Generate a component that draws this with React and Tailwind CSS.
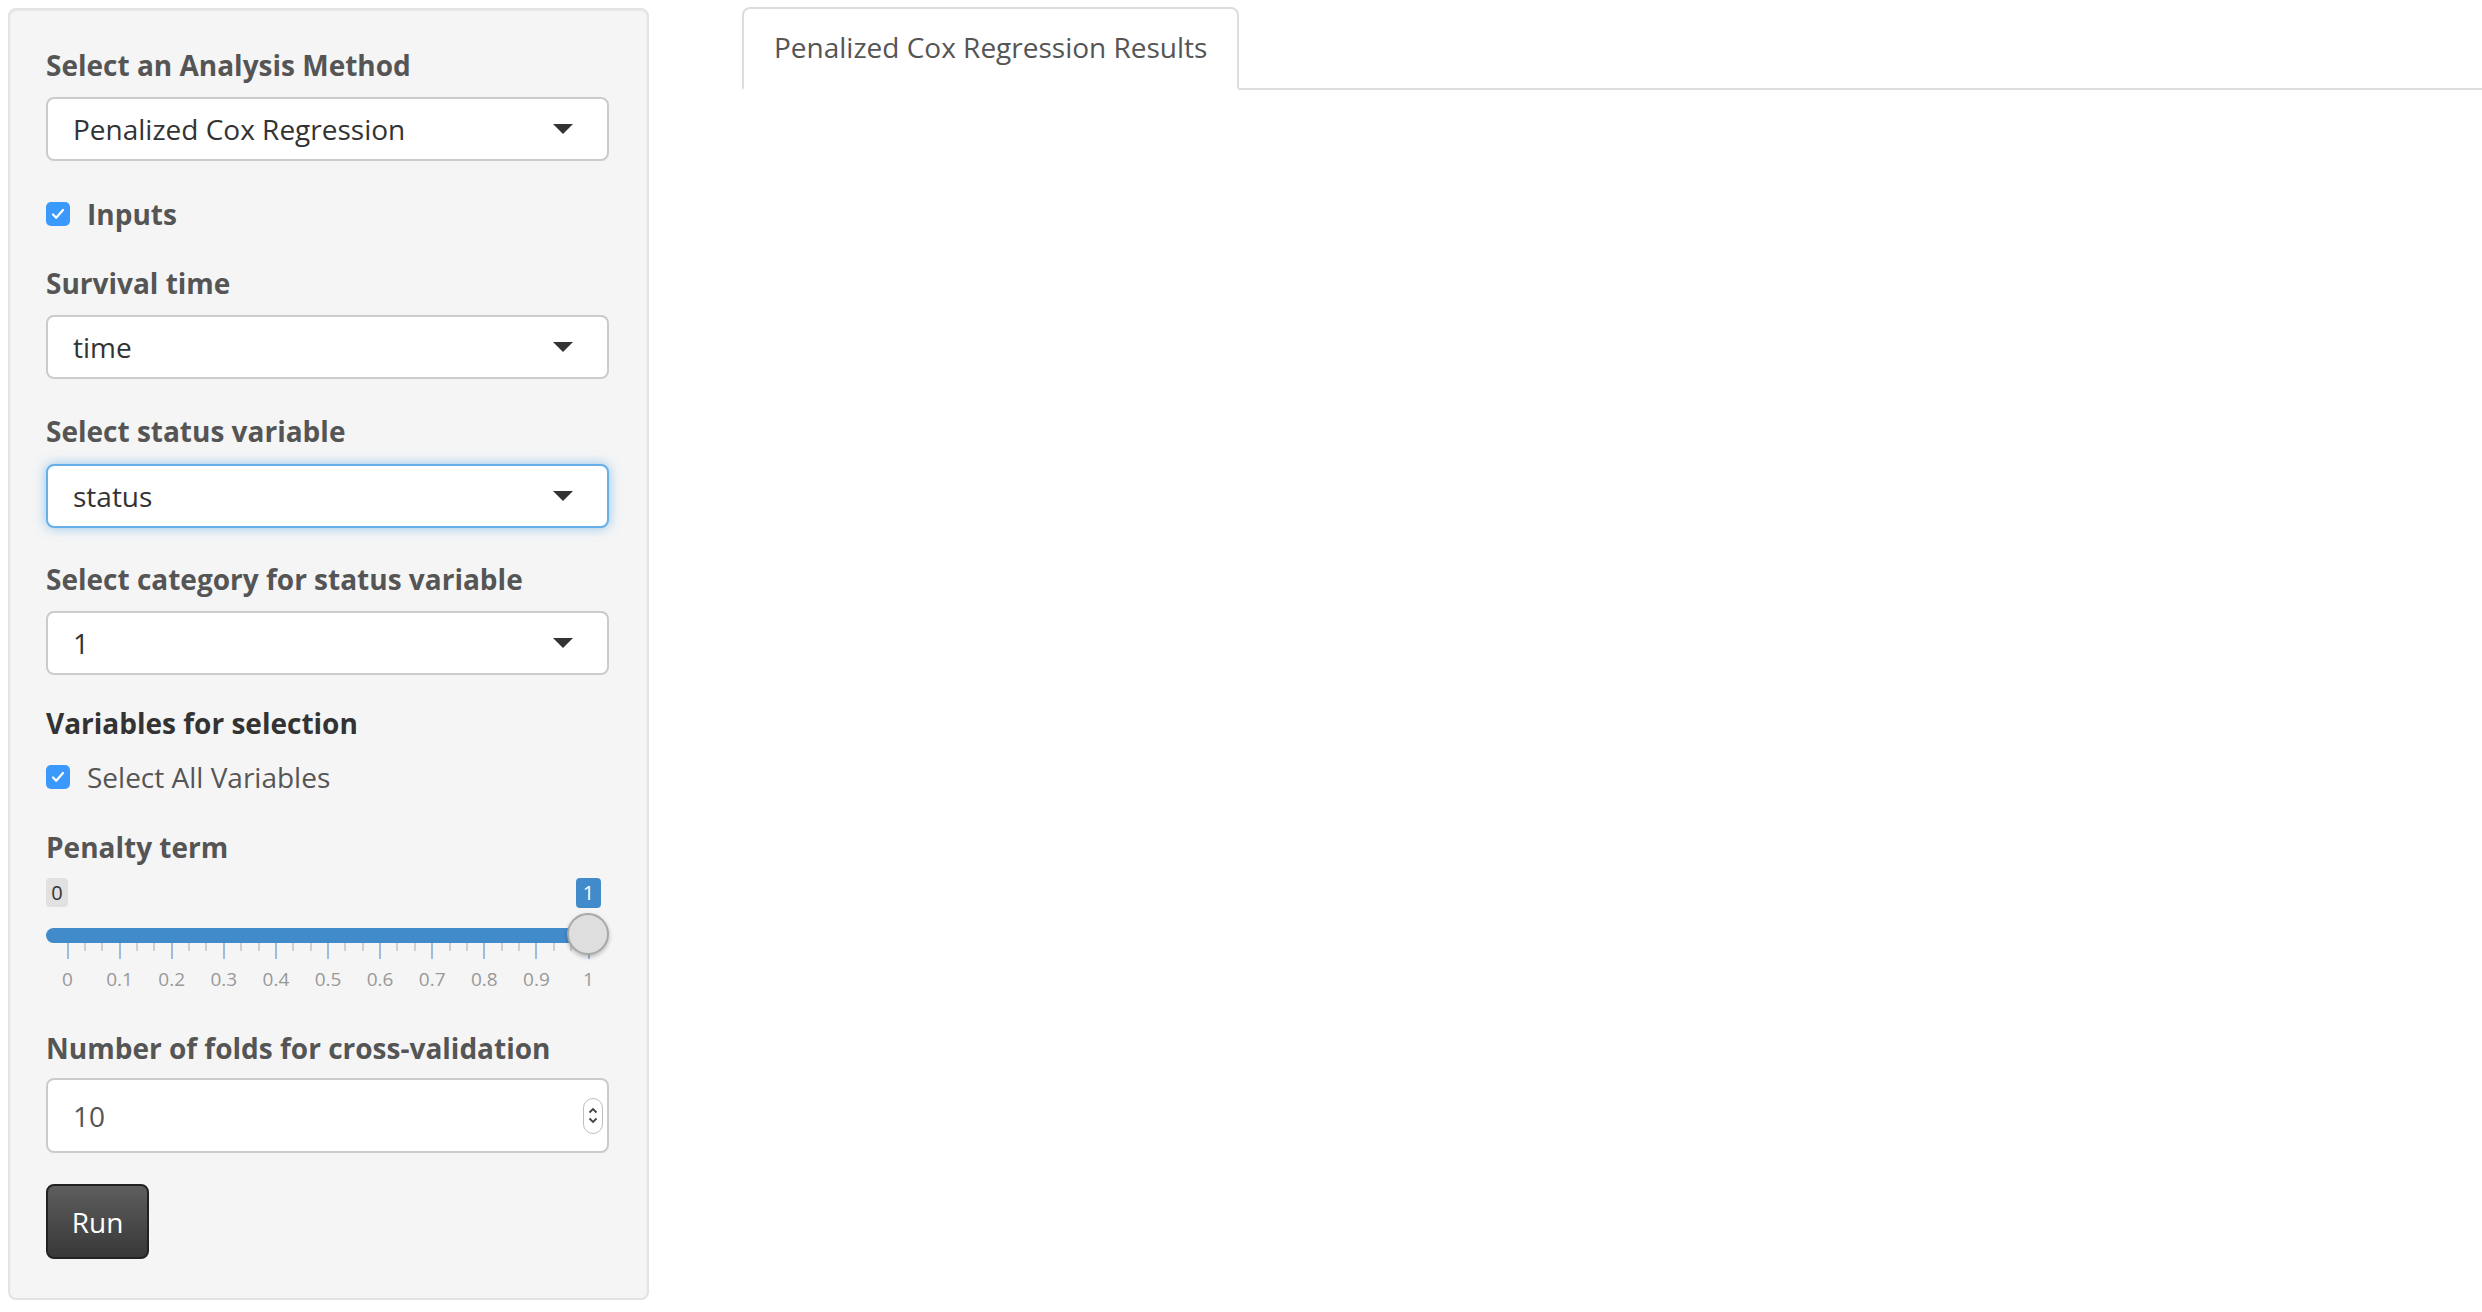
import { useState } from "react";

const font = { fontFamily: "'Open Sans', 'Liberation Sans', sans-serif" };

const labelCls = "block text-[28px] leading-[40px] font-bold text-[#555]";

function Caret() {
  return (
    <svg width="20" height="10" viewBox="0 0 20 10">
      <path d="M0 0h20L10 10z" fill="#333" />
    </svg>
  );
}

function Select({ value, focused, className }) {
  return (
    <div
      className={
        focused
          ? `flex h-[64px] items-center justify-between rounded-[8px] border-2 border-[#66afe9] bg-white pl-[25px] pr-[34px] text-[28px] text-[#333] shadow-[0_0_12px_rgba(102,175,233,0.7)] ${className}`
          : `flex h-[64px] items-center justify-between rounded-[8px] border-2 border-[#cbcbcb] bg-white pl-[25px] pr-[34px] text-[28px] text-[#333] ${className}`
      }
    >
      <span>{value}</span>
      <Caret />
    </div>
  );
}

function Check({ label, bold, className }) {
  return (
    <label className={`flex h-[40px] items-center ${className}`}>
      <span className="flex h-[24px] w-[24px] items-center justify-center rounded-[5px] bg-[#3b99fc]">
        <svg width="14" height="12" viewBox="0 0 14 12">
          <path d="M2 6.5l3.2 3.3L12 2" fill="none" stroke="#fff" strokeWidth="2.2" strokeLinecap="round" strokeLinejoin="round" />
        </svg>
      </span>
      <span className={bold ? "ml-[17px] text-[28px] font-bold text-[#555]" : "ml-[17px] text-[28px] text-[#555]"}>{label}</span>
    </label>
  );
}

function PenaltySlider() {
  const ticks = Array.from({ length: 31 }, (_, i) => i);
  const x0 = 21.5;
  const span = 521;
  return (
    <div className="relative mt-[11px] h-[122px]">
      <span className="absolute left-0 top-0 flex h-[29px] w-[22px] items-center justify-center rounded-[4px] bg-[#e1e1e1] text-[20px] text-[#333]">
        0
      </span>
      <span className="absolute left-[530px] top-0 flex h-[30px] w-[25px] items-center justify-center rounded-[4px] bg-[#428bca] text-[20px] text-white">
        1
      </span>
      <div className="absolute left-0 top-[50px] h-[15px] w-[548px] rounded-full bg-[#428bca]" />
      {ticks.map((i) => (
        <span
          key={i}
          className={i % 3 === 0 ? "absolute top-[65px] h-[16px] w-[2px] bg-[#9dbde0]" : "absolute top-[65px] h-[8px] w-[2px] bg-[#cfcfcf]"}
          style={{ left: x0 + (i * span) / 30 - 1 }}
        />
      ))}
      {Array.from({ length: 11 }, (_, i) => (
        <span
          key={i}
          className="absolute top-[90px] w-[50px] -translate-x-1/2 text-center text-[19px] leading-[22px] text-[#999]"
          style={{ left: x0 + (i * span) / 10 }}
        >
          {i === 0 ? "0" : i === 10 ? "1" : `0.${i}`}
        </span>
      ))}
      <div className="absolute left-[521px] top-[35px] h-[42px] w-[42px] rounded-full border-2 border-[#a8a8a8] bg-[#dedede] shadow-[0_2px_4px_rgba(0,0,0,0.25)]" />
    </div>
  );
}

export default function App() {
  const [tab] = useState("results");
  return (
    <div className="flex min-h-screen w-full bg-white pl-[8px] pt-[7px]" style={font}>
      <aside className="mt-[1px] flex h-[1292px] w-[641px] shrink-0 flex-col rounded-[8px] border-2 border-[#e3e3e3] bg-[#f5f5f5] pl-[36px] pr-[38px] pt-[35px] shadow-[inset_0_1px_2px_rgba(0,0,0,0.05)]">
        <span className={labelCls}>Select an Analysis Method</span>
        <Select value="Penalized Cox Regression" className="mt-[12px]" />

        <Check label="Inputs" bold className="mt-[33px]" />

        <span className={`${labelCls} mt-[29px]`}>Survival time</span>
        <Select value="time" className="mt-[12px]" />

        <span className={`${labelCls} mt-[32px]`}>Select status variable</span>
        <Select value="status" focused className="mt-[13px]" />

        <span className={`${labelCls} mt-[31px]`}>Select category for status variable</span>
        <Select value="1" className="mt-[12px]" />

        <span className="mt-[28px] block text-[28px] font-bold leading-[40px] text-[#333]">Variables for selection</span>
        <Check label="Select All Variables" className="mt-[14px]" />

        <span className={`${labelCls} mt-[30px]`}>Penalty term</span>
        <PenaltySlider />

        <span className={`${labelCls} mt-[28px]`}>Number of folds for cross-validation</span>
        <div className="mt-[10px] flex h-[75px] items-center justify-between rounded-[8px] border-2 border-[#cbcbcb] bg-white pl-[25px] pr-[4px] text-[28px] text-[#555]">
          <span>10</span>
          <span className="flex h-[36px] w-[20px] flex-col items-center justify-center gap-[3px] rounded-full border border-[#bdbdbd] bg-white">
            <svg width="10" height="7" viewBox="0 0 10 7">
              <path d="M1.5 5.5L5 2l3.5 3.5" fill="none" stroke="#444" strokeWidth="1.8" />
            </svg>
            <svg width="10" height="7" viewBox="0 0 10 7">
              <path d="M1.5 1.5L5 5l3.5-3.5" fill="none" stroke="#444" strokeWidth="1.8" />
            </svg>
          </span>
        </div>

        <button
          type="button"
          className="mt-[31px] flex h-[75px] w-[103px] items-center justify-center rounded-[8px] border-2 border-[#222] bg-linear-to-b from-[#5e5e5e] to-[#383838] text-[28px] text-white"
        >
          Run
        </button>
      </aside>

      <main className="ml-[93px] flex-1">
        <ul className="flex border-b-2 border-[#ddd]">
          <li
            className={
              tab === "results"
                ? "-mb-[2px] rounded-t-[8px] border-2 border-[#ddd] border-b-white bg-white px-[30px] pb-[21px] pt-[18px] text-[28px] leading-[40px] text-[#555]"
                : "px-[30px] pb-[21px] pt-[18px] text-[28px] leading-[40px] text-[#555]"
            }
          >
            Penalized Cox Regression Results
          </li>
        </ul>
      </main>
    </div>
  );
}
